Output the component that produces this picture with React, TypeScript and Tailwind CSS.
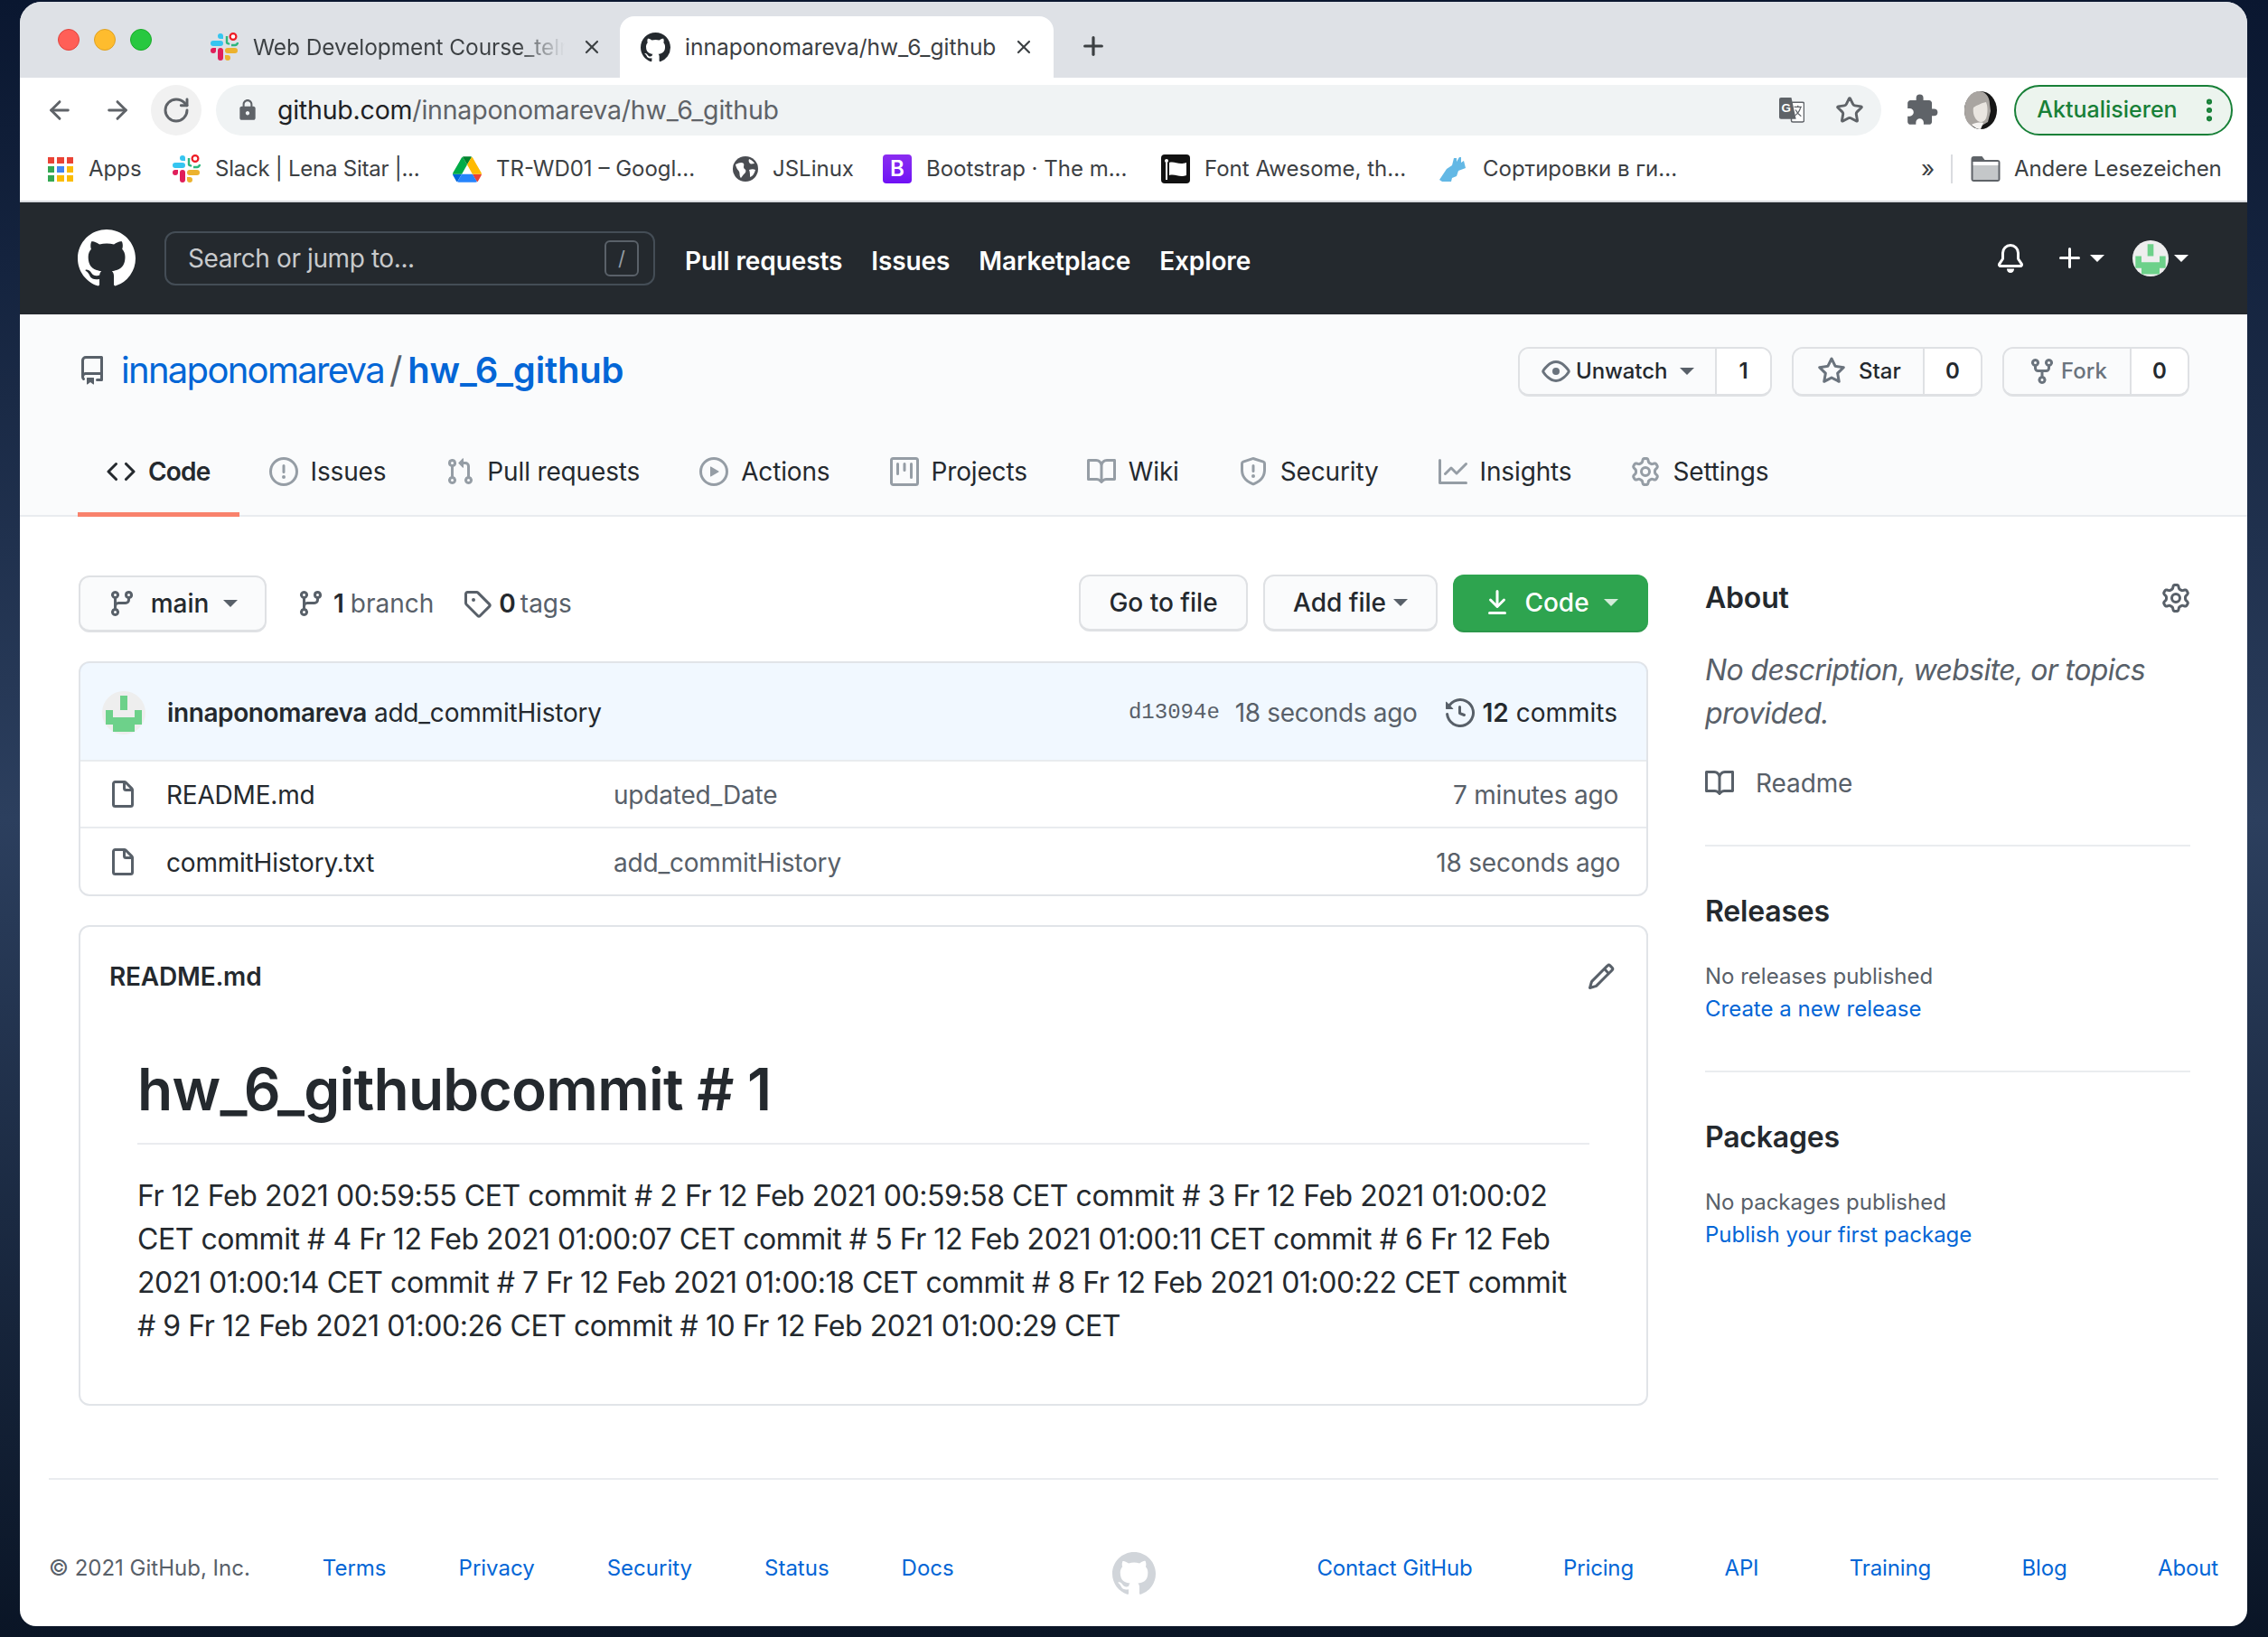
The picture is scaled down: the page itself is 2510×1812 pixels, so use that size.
import { ArrowLeft, ArrowRight, RotateCw, Star, X, Plus, EllipsisVertical } from "lucide-react";
import { MdExtension, MdLock } from "react-icons/md";

const octicons: Record<string, string> = {
  github: "M8 0C3.58 0 0 3.58 0 8c0 3.54 2.29 6.53 5.47 7.59.4.07.55-.17.55-.38 0-.19-.01-.82-.01-1.49-2.01.37-2.53-.49-2.69-.94-.09-.23-.48-.94-.82-1.13-.28-.15-.68-.52-.01-.53.63-.01 1.08.58 1.23.82.72 1.21 1.87.87 2.33.66.07-.52.28-.87.51-1.07-1.78-.2-3.64-.89-3.64-3.95 0-.87.31-1.59.82-2.15-.08-.2-.36-1.02.08-2.12 0 0 .67-.21 2.2.82.64-.18 1.32-.27 2-.27.68 0 1.36.09 2 .27 1.53-1.04 2.2-.82 2.2-.82.44 1.1.16 1.92.08 2.12.51.56.82 1.27.82 2.15 0 3.07-1.87 3.75-3.65 3.95.29.25.54.73.54 1.48 0 1.07-.01 1.93-.01 2.2 0 .21.15.46.55.38A8.013 8.013 0 0016 8c0-4.42-3.58-8-8-8z",
  repo: "M2 2.5A2.5 2.5 0 014.5 0h8.75a.75.75 0 01.75.75v12.5a.75.75 0 01-.75.75h-2.5a.75.75 0 110-1.5h1.75v-2h-8a1 1 0 00-.714 1.7.75.75 0 01-1.072 1.05A2.495 2.495 0 012 11.5v-9zm10.5-1V9h-8c-.356 0-.694.074-1 .208V2.5a1 1 0 011-1h8zM5 12.25v3.25a.25.25 0 00.4.2l1.45-1.087a.25.25 0 01.3 0L8.6 15.7a.25.25 0 00.4-.2v-3.25a.25.25 0 00-.25-.25h-3.5a.25.25 0 00-.25.25z",
  code: "M4.72 3.22a.75.75 0 011.06 1.06L2.06 8l3.72 3.72a.75.75 0 11-1.06 1.06L.47 8.53a.75.75 0 010-1.06l4.25-4.25zm6.56 0a.75.75 0 10-1.06 1.06L13.94 8l-3.72 3.72a.75.75 0 101.06 1.06l4.25-4.25a.75.75 0 000-1.06l-4.25-4.25z",
  issue: "M8 1.5a6.5 6.5 0 100 13 6.5 6.5 0 000-13zM0 8a8 8 0 1116 0A8 8 0 010 8zm9 3a1 1 0 11-2 0 1 1 0 012 0zm-.25-6.25a.75.75 0 00-1.5 0v3.5a.75.75 0 001.5 0v-3.5z",
  pr: "M7.177 3.073L9.573.677A.25.25 0 0110 .854v4.792a.25.25 0 01-.427.177L7.177 3.427a.25.25 0 010-.354zM3.75 2.5a.75.75 0 100 1.5.75.75 0 000-1.5zm-2.25.75a2.25 2.25 0 113 2.122v5.256a2.251 2.251 0 11-1.5 0V5.372A2.25 2.25 0 011.5 3.25zM11 2.5h-1V4h1a1 1 0 011 1v5.628a2.251 2.251 0 101.5 0V5A2.5 2.5 0 0011 2.5zm1 10.25a.75.75 0 111.5 0 .75.75 0 01-1.5 0zM3.75 12a.75.75 0 100 1.5.75.75 0 000-1.5z",
  play: "M1.5 8a6.5 6.5 0 1113 0 6.5 6.5 0 01-13 0zM8 0a8 8 0 100 16A8 8 0 008 0zM6.379 5.227A.25.25 0 006 5.442v5.117a.25.25 0 00.379.214l4.264-2.559a.25.25 0 000-.428L6.379 5.227z",
  project: "M1.75 0A1.75 1.75 0 000 1.75v12.5C0 15.216.784 16 1.75 16h12.5A1.75 1.75 0 0016 14.25V1.75A1.75 1.75 0 0014.25 0H1.75zM1.5 1.75a.25.25 0 01.25-.25h12.5a.25.25 0 01.25.25v12.5a.25.25 0 01-.25.25H1.75a.25.25 0 01-.25-.25V1.75zM11.75 3a.75.75 0 00-.75.75v7.5a.75.75 0 001.5 0v-7.5a.75.75 0 00-.75-.75zm-8.25.75a.75.75 0 011.5 0v5.5a.75.75 0 01-1.5 0v-5.5zM8 3a.75.75 0 00-.75.75v3.5a.75.75 0 001.5 0v-3.5A.75.75 0 008 3z",
  book: "M0 1.75A.75.75 0 01.75 1h4.253c1.227 0 2.317.59 3 1.501A3.744 3.744 0 0111.006 1h4.245a.75.75 0 01.75.75v10.5a.75.75 0 01-.75.75h-4.507a2.25 2.25 0 00-1.591.659l-.622.621a.75.75 0 01-1.06 0l-.622-.621A2.25 2.25 0 005.258 13H.75a.75.75 0 01-.75-.75V1.75zm8.755 3a2.25 2.25 0 012.25-2.25H14.5v9h-3.757c-.71 0-1.4.201-1.992.572l.004-7.322zm-1.504 7.324l.004-5.073-.002-2.253A2.25 2.25 0 005.003 2.5H1.5v9h3.757a3.75 3.75 0 011.994.574z",
  shield: "M7.467.133a1.75 1.75 0 011.066 0l5.25 1.68A1.75 1.75 0 0115 3.48V7c0 1.566-.32 3.182-1.303 4.682-.983 1.498-2.585 2.813-5.032 3.855a1.7 1.7 0 01-1.33 0c-2.447-1.042-4.049-2.357-5.032-3.855C1.32 10.182 1 8.566 1 7V3.48a1.75 1.75 0 011.217-1.667l5.25-1.68zm.61 1.429a.25.25 0 00-.153 0l-5.25 1.68a.25.25 0 00-.174.238V7c0 1.358.275 2.666 1.057 3.86.784 1.194 2.121 2.34 4.366 3.297a.2.2 0 00.154 0c2.245-.956 3.582-2.104 4.366-3.298C13.225 9.666 13.5 8.36 13.5 7V3.48a.25.25 0 00-.174-.237l-5.25-1.68zM9 10.5a1 1 0 11-2 0 1 1 0 012 0zm-.25-5.75a.75.75 0 10-1.5 0v3a.75.75 0 001.5 0v-3z",
  graph: "M1.5 1.75a.75.75 0 00-1.5 0v12.5c0 .414.336.75.75.75h14.5a.75.75 0 000-1.5H1.5V1.75zm14.28 2.53a.75.75 0 00-1.06-1.06L10 7.94 7.53 5.47a.75.75 0 00-1.06 0L3.22 8.72a.75.75 0 001.06 1.06L7 7.06l2.47 2.47a.75.75 0 001.06 0l5.25-5.25z",
  gear: "M7.429 1.525a6.593 6.593 0 011.142 0c.036.003.108.036.137.146l.289 1.105c.147.56.55.967.997 1.189.174.086.341.183.501.29.417.278.97.423 1.53.27l1.102-.303c.11-.03.175.016.195.046.219.31.41.641.573.989.014.031.022.11-.059.19l-.815.806c-.411.406-.562.957-.53 1.456a4.588 4.588 0 010 .582c-.032.499.119 1.05.53 1.456l.815.806c.08.08.073.159.059.19a6.494 6.494 0 01-.573.99c-.02.029-.086.074-.195.045l-1.103-.303c-.559-.153-1.112-.008-1.529.27-.16.107-.327.204-.5.29-.449.222-.851.628-.998 1.189l-.289 1.105c-.029.11-.101.143-.137.146a6.613 6.613 0 01-1.142 0c-.036-.003-.108-.037-.137-.146l-.289-1.105c-.147-.56-.55-.967-.997-1.189a4.502 4.502 0 01-.501-.29c-.417-.278-.97-.423-1.53-.27l-1.102.303c-.11.03-.175-.016-.195-.046a6.492 6.492 0 01-.573-.989c-.014-.031-.022-.11.059-.19l.815-.806c.411-.406.562-.957.53-1.456a4.587 4.587 0 010-.582c.032-.499-.119-1.05-.53-1.456l-.815-.806c-.08-.08-.073-.159-.059-.19a6.44 6.44 0 01.573-.99c.02-.029.086-.075.195-.045l1.103.303c.559.153 1.112.008 1.529-.27.16-.107.327-.204.5-.29.449-.222.851-.628.998-1.189l.289-1.105c.029-.11.101-.143.137-.146zM8 0c-.236 0-.47.01-.701.03-.743.065-1.29.615-1.458 1.261l-.29 1.106c-.017.066-.078.158-.211.224a5.994 5.994 0 00-.668.386c-.123.082-.233.09-.3.071L3.27 2.776c-.644-.177-1.392.02-1.82.63a7.977 7.977 0 00-.704 1.217c-.315.675-.111 1.422.363 1.891l.815.806c.05.048.098.147.088.294a6.084 6.084 0 000 .772c.01.147-.038.246-.088.294l-.815.806c-.474.469-.678 1.216-.363 1.891.2.428.436.835.704 1.218.428.609 1.176.806 1.82.63l1.103-.303c.066-.019.176-.011.299.071.213.143.436.272.668.386.133.066.194.158.212.224l.289 1.106c.169.646.715 1.196 1.458 1.26a8.094 8.094 0 001.402 0c.743-.064 1.29-.614 1.458-1.26l.29-1.106c.017-.066.078-.158.211-.224a5.98 5.98 0 00.668-.386c.123-.082.233-.09.3-.071l1.102.302c.644.177 1.392-.02 1.82-.63.268-.382.505-.789.704-1.217.315-.675.111-1.422-.364-1.891l-.814-.806c-.05-.048-.098-.147-.088-.294a6.1 6.1 0 000-.772c-.01-.147.039-.246.088-.294l.814-.806c.475-.469.679-1.216.364-1.891a7.992 7.992 0 00-.704-1.218c-.428-.609-1.176-.806-1.82-.63l-1.103.303c-.066.019-.176.011-.299-.071a5.991 5.991 0 00-.668-.386c-.133-.066-.194-.158-.212-.224L10.16 1.29C9.99.645 9.444.095 8.701.031A8.094 8.094 0 008 0zm1.5 8a1.5 1.5 0 11-3 0 1.5 1.5 0 013 0zM11 8a3 3 0 11-6 0 3 3 0 016 0z",
  eye: "M1.679 7.932c.412-.621 1.242-1.75 2.366-2.717C5.175 4.242 6.527 3.5 8 3.5c1.473 0 2.824.742 3.955 1.715 1.124.967 1.954 2.096 2.366 2.717a.119.119 0 010 .136c-.412.621-1.242 1.75-2.366 2.717C10.825 11.758 9.473 12.5 8 12.5c-1.473 0-2.824-.742-3.955-1.715C2.92 9.818 2.09 8.69 1.679 8.068a.119.119 0 010-.136zM8 2c-1.981 0-3.67.992-4.933 2.078C1.797 5.169.88 6.423.43 7.1a1.619 1.619 0 000 1.798c.45.678 1.367 1.932 2.637 3.024C4.329 13.008 6.019 14 8 14c1.981 0 3.67-.992 4.933-2.078 1.27-1.091 2.187-2.345 2.637-3.023a1.619 1.619 0 000-1.798c-.45-.678-1.367-1.932-2.637-3.023C11.671 2.992 9.981 2 8 2zm0 8a2 2 0 100-4 2 2 0 000 4z",
  star: "M8 .25a.75.75 0 01.673.418l1.882 3.815 4.21.612a.75.75 0 01.416 1.279l-3.046 2.97.719 4.192a.75.75 0 01-1.088.791L8 12.347l-3.766 1.98a.75.75 0 01-1.088-.79l.72-4.194L.818 6.374a.75.75 0 01.416-1.28l4.21-.611L7.327.668A.75.75 0 018 .25zm0 2.445L6.615 5.5a.75.75 0 01-.564.41l-3.097.45 2.24 2.184a.75.75 0 01.216.664l-.528 3.084 2.769-1.456a.75.75 0 01.698 0l2.77 1.456-.53-3.084a.75.75 0 01.216-.664l2.24-2.183-3.096-.45a.75.75 0 01-.564-.41L8 2.694v.001z",
  fork: "M5 3.25a.75.75 0 11-1.5 0 .75.75 0 011.5 0zm0 2.122a2.25 2.25 0 10-1.5 0v.878A2.25 2.25 0 005.75 8.5h1.5v2.128a2.251 2.251 0 101.5 0V8.5h1.5a2.25 2.25 0 002.25-2.25v-.878a2.25 2.25 0 10-1.5 0v.878a.75.75 0 01-.75.75h-4.5A.75.75 0 015 6.25v-.878zm3.75 7.378a.75.75 0 11-1.5 0 .75.75 0 011.5 0zm3-8.75a.75.75 0 100-1.5.75.75 0 000 1.5z",
  branch: "M11.75 2.5a.75.75 0 100 1.5.75.75 0 000-1.5zm-2.25.75a2.25 2.25 0 113 2.122V6A2.5 2.5 0 0110 8.5H6a1 1 0 00-1 1v1.128a2.251 2.251 0 11-1.5 0V5.372a2.25 2.25 0 111.5 0v1.836A2.492 2.492 0 016 7h4a1 1 0 001-1v-.628A2.25 2.25 0 019.5 3.25zM4.25 12a.75.75 0 100 1.5.75.75 0 000-1.5zM3.5 3.25a.75.75 0 111.5 0 .75.75 0 01-1.5 0z",
  tag: "M2.5 7.775V2.75a.25.25 0 01.25-.25h5.025a.25.25 0 01.177.073l6.25 6.25a.25.25 0 010 .354l-5.025 5.025a.25.25 0 01-.354 0l-6.25-6.25a.25.25 0 01-.073-.177zm-1.5 0V2.75C1 1.784 1.784 1 2.75 1h5.025c.464 0 .91.184 1.238.513l6.25 6.25a1.75 1.75 0 010 2.474l-5.026 5.026a1.75 1.75 0 01-2.474 0l-6.25-6.25A1.75 1.75 0 011 7.775zM6 5a1 1 0 100 2 1 1 0 000-2z",
  download: "M7.47 10.78a.75.75 0 001.06 0l3.75-3.75a.75.75 0 00-1.06-1.06L8.75 8.44V1.75a.75.75 0 00-1.5 0v6.69L4.78 5.97a.75.75 0 00-1.06 1.06l3.75 3.75zM3.75 13a.75.75 0 000 1.5h8.5a.75.75 0 000-1.5h-8.5z",
  history: "M1.643 3.143L.427 1.927A.25.25 0 000 2.104V5.75c0 .138.112.25.25.25h3.646a.25.25 0 00.177-.427L2.715 4.215a6.5 6.5 0 11-1.18 4.458.75.75 0 10-1.493.154 8.001 8.001 0 101.6-5.684zM7.75 4a.75.75 0 01.75.75v2.992l2.028.812a.75.75 0 01-.557 1.392l-2.5-1A.75.75 0 017 8.25v-3.5A.75.75 0 017.75 4z",
  file: "M3.75 1.5a.25.25 0 00-.25.25v11.5c0 .138.112.25.25.25h8.5a.25.25 0 00.25-.25V6H9.75A1.75 1.75 0 018 4.25V1.5H3.75zm5.75.56v2.19c0 .138.112.25.25.25h2.19L9.5 2.06zM2 1.75C2 .784 2.784 0 3.75 0h5.086c.464 0 .909.184 1.237.513l3.414 3.414c.329.328.513.773.513 1.237v8.086A1.75 1.75 0 0112.25 15h-8.5A1.75 1.75 0 012 13.25V1.75z",
  pencil: "M11.013 1.427a1.75 1.75 0 012.474 0l1.086 1.086a1.75 1.75 0 010 2.474l-8.61 8.61c-.21.21-.47.364-.756.445l-3.251.93a.75.75 0 01-.927-.928l.929-3.25a1.75 1.75 0 01.445-.758l8.61-8.61zm1.414 1.06a.25.25 0 00-.354 0L10.811 3.75l1.439 1.44 1.263-1.263a.25.25 0 000-.354l-1.086-1.086zM11.189 6.25L9.75 4.81l-6.286 6.287a.25.25 0 00-.064.108l-.558 1.953 1.953-.558a.249.249 0 00.108-.064l6.286-6.286z",
  bell: "M8 16a2 2 0 001.985-2.25h-3.97A2 2 0 008 16zM3 5a5 5 0 0110 0v2.947c0 .05.015.098.042.139l1.703 2.555A1.518 1.518 0 0113.482 13H2.518a1.518 1.518 0 01-1.263-2.36l1.703-2.554A.25.25 0 003 7.947V5zm5-3.5A3.5 3.5 0 004.5 5v2.947c0 .346-.102.683-.294.97l-1.703 2.556a.018.018 0 00-.003.01l.001.006c0 .002.002.004.004.006a.017.017 0 00.006.004l.007.001h10.964l.007-.001a.016.016 0 00.006-.004.016.016 0 00.004-.006l.001-.007a.017.017 0 00-.003-.01l-1.703-2.554a1.75 1.75 0 01-.294-.97V5A3.5 3.5 0 008 1.5z",
  plus: "M7.75 2a.75.75 0 01.75.75V7h4.25a.75.75 0 110 1.5H8.5v4.25a.75.75 0 11-1.5 0V8.5H2.75a.75.75 0 010-1.5H7V2.75A.75.75 0 017.75 2z",
};

const Octicon = ({ name, className }: { name: string; className: string }) => (
  <svg viewBox="0 0 16 16" fill="currentColor" className={`shrink-0 ${className}`}>
    <path fillRule="evenodd" d={octicons[name]} />
  </svg>
);

const Caret = ({ className = "" }: { className?: string }) => (
  <span className={`inline-block w-0 h-0 border-x-[8px] border-t-[8px] border-x-transparent border-t-current ${className}`} />
);

const SlackLogo = ({ className }: { className: string }) => (
  <svg viewBox="0 0 32 32" className={`shrink-0 ${className}`}>
    <path fill="#36c5f0" d="M12 1a3 3 0 000 6h3V4a3 3 0 00-3-3zM4 9a3 3 0 000 6h8a3 3 0 000-6z" />
    <path fill="none" stroke="#2eb67d" strokeWidth="2.4" d="M19 4v7a2 2 0 003 1M24 14h4a3 3 0 003-3" />
    <circle cx="26" cy="4.5" r="3.4" fill="#fff" stroke="#ee1c25" strokeWidth="2.2" />
    <path fill="#ecb22e" d="M20 31a3 3 0 000-6h-3v3a3 3 0 003 3zM28 23a3 3 0 000-6h-8a3 3 0 000 6z" />
    <path fill="#e01e5a" d="M1 20a3 3 0 006 0v-3H4a3 3 0 00-3 3zM9 28a3 3 0 006 0v-8a3 3 0 00-6 0z" />
  </svg>
);

const DriveLogo = () => (
  <svg viewBox="0 0 87.3 78" className="w-[32px] h-[29px] shrink-0">
    <path fill="#0066da" d="m6.6 66.85 3.85 6.65c.8 1.4 1.95 2.5 3.3 3.3l13.75-23.8h-27.5c0 1.55.4 3.1 1.2 4.5z" />
    <path fill="#00ac47" d="m43.65 25-13.75-23.8c-1.35.8-2.5 1.9-3.3 3.3l-25.4 44a9.06 9.06 0 0 0 -1.2 4.5h27.5z" />
    <path fill="#ea4335" d="m73.55 76.8c1.35-.8 2.5-1.9 3.3-3.3l1.6-2.75 7.65-13.25c.8-1.4 1.2-2.95 1.2-4.5h-27.502l5.852 11.5z" />
    <path fill="#00832d" d="m43.65 25 13.75-23.8c-1.35-.8-2.9-1.2-4.5-1.2h-18.5c-1.6 0-3.15.45-4.5 1.2z" />
    <path fill="#2684fc" d="m59.8 53h-32.3l-13.75 23.8c1.35.8 2.9 1.2 4.5 1.2h50.8c1.6 0 3.15-.45 4.5-1.2z" />
    <path fill="#ffba00" d="m73.4 26.5-12.7-22c-.8-1.4-1.95-2.5-3.3-3.3l-13.75 23.8 16.15 28h27.45c0-1.55-.4-3.1-1.2-4.5z" />
  </svg>
);

const Identicon = ({ className }: { className: string }) => (
  <svg viewBox="0 0 48 48" className={`shrink-0 ${className}`}>
    <circle cx="24" cy="24" r="24" fill="#eeeeee" />
    <path fill="#6dd18a" d="M20 5h8v16h-8zM4 21h8v8h24v-8h8v16h-8v8H12v-8H4z" />
  </svg>
);

const bookmarks = [
  { label: "Slack | Lena Sitar |...", width: "w-[229px] tracking-[-0.25px]", gap: "ml-[32px]", icon: <SlackLogo className="w-[32px] h-[32px]" /> },
  { label: "TR-WD01 – Googl...", width: "w-[222px]", gap: "ml-[34px]", icon: <DriveLogo /> },
  { label: "JSLinux", width: "w-[89px]", gap: "ml-[40px]", icon: (
    <svg viewBox="0 0 28 28" className="w-[28px] h-[28px] shrink-0">
      <circle cx="14" cy="14" r="14" fill="#4a4d52" />
      <path fill="#fff" d="M3 9c4-2 7-3 9-1 1 2-1 4 1 6 2 1 2 4-1 6l-3 4c-2-2-1-5-2-7-1-2-3-3-4-8zM18 3c3 1 5 3 6 5-2 0-4 1-5 0s-2-3-1-5zM18 15c3-1 5-1 7 0-1 4-3 7-6 8 0-3 0-6-1-8z" />
    </svg>
  ) },
  { label: "Bootstrap · The m...", width: "w-[221px]", gap: "ml-[33px]", icon: (
    <span className="w-[32px] h-[32px] shrink-0 rounded-[4px] bg-gradient-to-b from-[#8b2cf0] to-[#6f0ff5] text-white font-semibold text-[24px] leading-[32px] text-center">B</span>
  ) },
  { label: "Font Awesome, th...", width: "w-[221px]", gap: "ml-[39px]", icon: (
    <svg viewBox="0 0 32 32" className="w-[32px] h-[32px] shrink-0">
      <rect width="32" height="32" rx="4" fill="#111" />
      <circle cx="6" cy="7" r="2" fill="#fff" />
      <path fill="#fff" d="M5 9h2v19H5zM9 9c6-2 10 3 19 0v14c-8 3-12-2-19 0z" />
    </svg>
  ) },
  { label: "Сортировки в ги...", width: "w-[215px]", gap: "ml-[39px]", icon: (
    <svg viewBox="0 0 32 28" className="w-[32px] h-[28px] shrink-0">
      <path fill="#63b8e5" d="M0 26l8-12 6-4 2-8h3v4l3-5h2v6l3-2 2 8-8 3-2 6-5 2-1 4H3z" />
    </svg>
  ) },
];

const repoTabs = [
  { label: "Issues", icon: "issue" },
  { label: "Pull requests", icon: "pr" },
  { label: "Actions", icon: "play" },
  { label: "Projects", icon: "project" },
  { label: "Wiki", icon: "book" },
  { label: "Security", icon: "shield" },
  { label: "Insights", icon: "graph" },
  { label: "Settings", icon: "gear" },
];

const footerLeft = ["Terms", "Privacy", "Security", "Status", "Docs"];
const footerRight = ["Contact GitHub", "Pricing", "API", "Training", "Blog", "About"];

const BrowserChrome = () => (
  <div className="shrink-0 text-[#3c4043]">
    <div className="h-[84px] bg-[#dee1e6] flex items-end">
      <div className="flex items-center gap-[16px] h-[84px] pl-[42px]">
        <span className="w-[24px] h-[24px] rounded-full bg-[#ff5f57] border border-[#e0443e]" />
        <span className="w-[24px] h-[24px] rounded-full bg-[#febc2e] border border-[#dea123]" />
        <span className="w-[24px] h-[24px] rounded-full bg-[#28c840] border border-[#1aab29]" />
      </div>
      <div className="flex items-center h-[68px] w-[518px] pl-[64px]">
        <SlackLogo className="w-[32px] h-[32px]" />
        <span className="ml-[16px] w-[345px] overflow-hidden whitespace-nowrap text-[24.5px] tracking-[-0.1px] bg-gradient-to-r from-[#3c4043] from-[85%] to-transparent bg-clip-text text-transparent">Web Development Course_telran</span>
        <X className="ml-[18px] w-[24px] h-[24px]" strokeWidth={2.2} />
      </div>
      <div className="flex items-center h-[68px] w-[480px] bg-white rounded-t-[16px] pl-[23px]">
        <Octicon name="github" className="w-[33px] h-[33px] text-[#24292e]" />
        <span className="ml-[16px] w-[340px] whitespace-nowrap text-[24.5px]">innaponomareva/hw_6_github</span>
        <X className="ml-[23px] w-[24px] h-[24px]" strokeWidth={2.2} />
      </div>
      <Plus className="ml-[28px] mb-[19px] w-[32px] h-[32px]" strokeWidth={2.4} />
    </div>
    <div className="h-[72px] bg-white flex items-center pl-[28px] pr-[16px]">
      <ArrowLeft className="w-[32px] h-[32px] text-[#5f6368]" strokeWidth={2.2} />
      <ArrowRight className="ml-[32px] w-[32px] h-[32px] text-[#5f6368]" strokeWidth={2.2} />
      <span className="ml-[21px] w-[56px] h-[56px] rounded-full bg-[#f1f1f1] flex items-center justify-center">
        <RotateCw className="w-[32px] h-[32px] text-[#5f6368]" strokeWidth={2.2} />
      </span>
      <div className="ml-[16px] w-[1845px] h-[56px] rounded-full bg-[#f0f3f4] flex items-center pl-[22px] pr-[15px]">
        <MdLock className="w-[26px] h-[26px] text-[#5f6368]" />
        <span className="ml-[20px] text-[28.5px] tracking-[-0.2px] whitespace-nowrap text-[#202124]">github.com<span className="text-[#5f6368]">/innaponomareva/hw_6_github</span></span>
        <svg viewBox="0 0 27 27" className="ml-auto w-[28px] h-[28px] shrink-0">
          <rect x="13" y="5" width="13.5" height="21" rx="1.5" fill="#fff" stroke="#5f6368" strokeWidth="1.4" />
          <path d="M16 10h8M20 8.5v1.5M23 10c-1 4-3 7-6 9M17.5 13c1.5 3 3 5 6 7" stroke="#5f6368" strokeWidth="1.2" fill="none" />
          <path fill="#5f6368" d="M2 0h11l5 23H2a2 2 0 01-2-2V2a2 2 0 012-2z" />
          <text x="2.5" y="15" fontSize="13" fontWeight="700" fill="#fff" fontFamily="Liberation Sans, sans-serif">G</text>
        </svg>
        <Star className="ml-[34px] mr-[4px] w-[32px] h-[32px] text-[#5f6368]" strokeWidth={2.2} />
      </div>
      <MdExtension className="ml-[26px] w-[38px] h-[38px] text-[#5f6368]" />
      <svg viewBox="0 0 36 42" className="ml-[28px] w-[36px] h-[42px] shrink-0">
        <ellipse cx="18" cy="21" rx="18" ry="21" fill="#161616" />
        <path fill="#a9a5a1" d="M0 22C0 9 8 0 16 0c7 0 12 6 12 14l1 8-3 12-10 6C6 40 0 33 0 22z" />
        <path fill="#e9e5e0" d="M10 18c3-2 9-5 14-6 2 5 2 12 0 18-2 4-6 5-9 3-4-3-6-9-5-15z" />
        <path fill="#f4f2f0" d="M8 37c3-2 8-3 13-2l-3 7c-4 0-7-2-10-5z" />
      </svg>
      <div className="ml-[19px] w-[242px] h-[56px] rounded-full border-[2px] border-[#188038] bg-[#ecf4ee] flex items-center pl-[23px] text-[#188038]">
        <span className="text-[25px] font-medium whitespace-nowrap">Aktualisieren</span>
        <EllipsisVertical className="ml-[19px] w-[32px] h-[32px]" strokeWidth={2.6} />
      </div>
    </div>
    <div className="h-[66px] bg-white flex items-center pl-[31px] pb-[6px] border-b-[2px] border-[#dadce0] text-[24px] whitespace-nowrap">
      <div className="grid grid-cols-3 gap-[3px] w-[28px] shrink-0">
        {["bg-[#ea4335]","bg-[#ea4335]","bg-[#ea4335]","bg-[#34a853]","bg-[#4285f4]","bg-[#fbbc05]","bg-[#34a853]","bg-[#fbbc05]","bg-[#fbbc05]"].map((c, i) => (
          <span key={i} className={`h-[7px] ${c}`} />
        ))}
      </div>
      <span className="ml-[17px] w-[60px]">Apps</span>
      {bookmarks.map((b) => (
        <div key={b.label} className={`flex items-center ${b.gap}`}>
          {b.icon}
          <span className={`ml-[16px] ${b.width}`}>{b.label}</span>
        </div>
      ))}
      <span className="ml-[270px] w-[20px] text-[26px] leading-none">»</span>
      <span className="ml-[13px] w-[2px] h-[32px] bg-[#dadce0]" />
      <svg viewBox="0 0 32 28" className="ml-[20px] w-[33px] h-[28px] shrink-0">
        <path fill="#5f6368" d="M0 3a3 3 0 013-3h9l3 4h14a3 3 0 013 3v18a3 3 0 01-3 3H3a3 3 0 01-3-3z" />
        <path fill="#fff" d="M2 6h28v4H2z" />
        <path fill="#c4c7c9" d="M2 10h28v16H2z" />
      </svg>
      <span className="ml-[15px] tracking-[-0.1px]">Andere Lesezeichen</span>
    </div>
  </div>
);

const GithubHeader = () => (
  <div className="h-[124px] shrink-0 bg-[#24292e] flex items-center pl-[64px] pr-[65px] text-white">
    <Octicon name="github" className="w-[64px] h-[64px]" />
    <div className="ml-[32px] w-[543px] h-[60px] rounded-[12px] border-[2px] border-[#444d56] flex items-center justify-between pl-[24px] pr-[16px]">
      <span className="text-[28px] tracking-[-0.4px] text-[#c8cacc]">Search or jump to...</span>
      <span className="w-[38px] h-[40px] rounded-[6px] border-[2px] border-[#5a6169] flex items-center justify-center text-[22px] text-[#959da5]">/</span>
    </div>
    <nav className="ml-[33px] mt-[6px] flex items-center gap-[32px] text-[28px] tracking-[-0.1px] font-semibold whitespace-nowrap">
      <span>Pull requests</span>
      <span>Issues</span>
      <span>Marketplace</span>
      <span>Explore</span>
    </nav>
    <Octicon name="bell" className="ml-auto w-[32px] h-[32px]" />
    <Octicon name="plus" className="ml-[34px] w-[32px] h-[32px]" />
    <Caret className="ml-[6px]" />
    <Identicon className="ml-[31px] w-[40px] h-[40px]" />
    <Caret className="ml-[6px]" />
  </div>
);

const SocialButton = ({ icon, label, count, caret, w1, w2, muted, gap }: { icon: string; label: string; count: string; caret?: boolean; w1: string; w2: string; muted?: boolean; gap: string }) => (
  <div className="flex h-[55px] rounded-[12px] border-[2px] border-[#dfe1e4] border-b-[3px] text-[24px] font-medium overflow-hidden">
    <div className={`flex items-center border-r-[2px] border-[#dfe1e4] bg-[#fafbfc] ${w1} ${muted ? "text-[#6a737d]" : "text-[#24292e]"}`}>
      <Octicon name={icon} className="w-[32px] h-[32px] text-[#6a737d]" />
      <span className={gap}>{label}</span>
      {caret && <Caret className="ml-[14px] text-[#586069]" />}
    </div>
    <div className={`flex items-center justify-center bg-white font-semibold text-[#24292e] ${w2}`}>{count}</div>
  </div>
);

const RepoHead = () => (
  <div className="h-[224px] shrink-0 bg-[#fafbfc] border-b-[2px] border-[#e9ecef] flex flex-col justify-between pl-[64px] pr-[64px]">
    <div className="flex justify-between pt-[36px]">
      <div className="flex items-center h-[52px] text-[40px] whitespace-nowrap">
        <Octicon name="repo" className="w-[32px] h-[32px] text-[#586069]" />
        <span className="ml-[16px] tracking-[-1.7px] text-[#0366d6]">innaponomareva</span>
        <span className="mx-[6px] text-[#586069]">/</span>
        <span className="font-semibold tracking-[-0.2px] text-[#0366d6]">hw_6_github</span>
      </div>
      <div className="flex gap-[22px]">
        <SocialButton icon="eye" label="Unwatch" count="1" caret w1="w-[218px] pl-[24px]" w2="w-[59px]" gap="ml-[6px] tracking-[-0.1px]" />
        <SocialButton icon="star" label="Star" count="0" w1="w-[145px] pl-[26px]" w2="w-[62px]" gap="ml-[14px]" />
        <SocialButton icon="fork" label="Fork" count="0" muted w1="w-[141px] pl-[26px]" w2="w-[62px]" gap="ml-[5px]" />
      </div>
    </div>
    <nav className="flex -mb-[2px] text-[28px] text-[#24292e] whitespace-nowrap">
      <div className="flex items-center h-[73px] px-[32px] pb-[22px] border-b-[5px] border-[#f9826c] font-semibold">
        <Octicon name="code" className="w-[32px] h-[32px]" />
        <span className="ml-[14px] tracking-[-0.8px]">Code</span>
      </div>
      {repoTabs.map((t) => (
        <div key={t.label} className="flex items-center h-[73px] px-[33px] pb-[22px] border-b-[5px] border-transparent">
          <Octicon name={t.icon} className="w-[32px] h-[32px] text-[#959da5]" />
          <span className="ml-[14px] tracking-[-0.15px]">{t.label}</span>
        </div>
      ))}
    </nav>
  </div>
);

const Btn = ({ children, w }: { children: React.ReactNode; w: string }) => (
  <div className={`h-[63px] ${w} rounded-[12px] border-[2px] border-[#dfe1e4] border-b-[3px] bg-[#fafbfc] flex items-center justify-center text-[28px] font-medium text-[#24292e] whitespace-nowrap`}>
    {children}
  </div>
);

const FileRow = ({ name, msg, time, h, pr }: { name: string; msg: string; time: string; h: string; pr: string }) => (
  <div className={`flex items-center ${h} ${pr} pl-[31px] pt-[2px] border-t-[2px] border-[#e9ecef] text-[28px] tracking-[-0.2px] whitespace-nowrap`}>
    <Octicon name="file" className="w-[32px] h-[32px] text-[#586069]" />
    <span className="ml-[32px] w-[495px] text-[#24292e]">{name}</span>
    <span className="text-[#586069]">{msg}</span>
    <span className="ml-auto text-[#586069]">{time}</span>
  </div>
);

const MainColumn = () => (
  <div className="w-[1737px] shrink-0">
    <div className="flex items-center text-[28px] whitespace-nowrap">
      <Btn w="w-[208px]">
        <Octicon name="branch" className="w-[32px] h-[32px] text-[#586069]" />
        <span className="ml-[16px]">main</span>
        <Caret className="ml-[16px] text-[#586069]" />
      </Btn>
      <Octicon name="branch" className="ml-[33px] w-[32px] h-[32px] text-[#586069]" />
      <span className="ml-[9px] font-semibold text-[#24292e]">1</span>
      <span className="ml-[7px] text-[#586069]">branch</span>
      <Octicon name="tag" className="ml-[32px] w-[32px] h-[32px] text-[#586069]" />
      <span className="ml-[8px] font-semibold text-[#24292e]">0</span>
      <span className="ml-[5px] text-[#586069]">tags</span>
      <div className="ml-auto flex gap-[17px]">
        <Btn w="w-[187px]">Go to file</Btn>
        <Btn w="w-[193px]">
          Add file
          <Caret className="ml-[8px] text-[#586069]" />
        </Btn>
        <div className="h-[64px] w-[216px] rounded-[12px] bg-[#2ea44f] border-b-[2px] border-[#2c974b] flex items-center justify-center text-white font-medium text-[28px]">
          <Octicon name="download" className="w-[32px] h-[32px]" />
          <span className="ml-[14px]">Code</span>
          <Caret className="ml-[16px] text-[#d3ecd9]" />
        </div>
      </div>
    </div>

    <div className="mt-[32px] rounded-[12px] border-[2px] border-[#e1e4e8] overflow-hidden">
      <div className="h-[109px] -m-[2px] mb-0 rounded-t-[12px] border-[2px] border-b-0 border-[#c8e1ff] bg-[#f1f8ff] flex items-center pl-[24px] pr-[32px] pt-[2px] text-[28px] whitespace-nowrap">
        <Identicon className="w-[48px] h-[48px]" />
        <span className="ml-[24px] font-semibold tracking-[-0.4px] text-[#24292e]">innaponomareva</span>
        <span className="ml-[8px] tracking-[-0.2px] text-[#24292e]">add_commitHistory</span>
        <span className="ml-auto font-['Liberation_Mono',monospace] text-[24px] text-[#586069]">d13094e</span>
        <span className="ml-[17px] tracking-[-0.35px] text-[#586069]">18 seconds ago</span>
        <Octicon name="history" className="ml-[32px] w-[32px] h-[32px] text-[#586069]" />
        <span className="ml-[8px] font-semibold text-[#24292e]">12</span>
        <span className="ml-[8px] text-[#24292e]">commits</span>
      </div>
      <FileRow name="README.md" msg="updated_Date" time="7 minutes ago" h="h-[74px]" pr="pr-[31px]" />
      <FileRow name="commitHistory.txt" msg="add_commitHistory" time="18 seconds ago" h="h-[75px]" pr="pr-[29px]" />
    </div>

    <div className="mt-[32px] h-[532px] rounded-[12px] border-[2px] border-[#e1e4e8]">
      <div className="h-[110px] flex items-center justify-between pl-[32px] pr-[34px] text-[28px] tracking-[-0.2px] font-semibold text-[#24292e]">
        <span>README.md</span>
        <Octicon name="pencil" className="w-[32px] h-[32px] text-[#586069]" />
      </div>
      <div className="px-[63px] pt-[30px]">
        <h1 className="pb-[19px] border-b-[2px] border-[#eaecef] text-[64px] leading-[80px] tracking-[-0.76px] font-semibold text-[#24292e] whitespace-nowrap">hw_6_githubcommit # 1</h1>
        <p className="mt-[33px] text-[32px] leading-[48px] tracking-[-0.45px] text-[#24292e] whitespace-nowrap">
          Fr 12 Feb 2021 00:59:55 CET commit # 2 Fr 12 Feb 2021 00:59:58 CET commit # 3 Fr 12 Feb 2021 01:00:02<br />
          CET commit # 4 Fr 12 Feb 2021 01:00:07 CET commit # 5 Fr 12 Feb 2021 01:00:11 CET commit # 6 Fr 12 Feb<br />
          2021 01:00:14 CET commit # 7 Fr 12 Feb 2021 01:00:18 CET commit # 8 Fr 12 Feb 2021 01:00:22 CET commit<br />
          # 9 Fr 12 Feb 2021 01:00:26 CET commit # 10 Fr 12 Feb 2021 01:00:29 CET
        </p>
      </div>
    </div>
  </div>
);

const SideHeading = ({ children }: { children: React.ReactNode }) => (
  <h2 className="text-[32px] leading-[48px] tracking-[-0.2px] font-semibold text-[#24292e]">{children}</h2>
);

const Sidebar = () => (
  <aside className="w-[537px] shrink-0 ml-[63px] pt-[2px]">
    <div className="flex items-center justify-between">
      <SideHeading>About</SideHeading>
      <Octicon name="gear" className="w-[32px] h-[32px] text-[#586069]" />
    </div>
    <p className="mt-[32px] text-[32px] leading-[48px] tracking-[-0.6px] italic text-[#586069]">No description, website, or topics provided.</p>
    <div className="mt-[37px] flex items-center h-[32px] text-[28px] tracking-[-0.1px] text-[#586069]">
      <Octicon name="book" className="w-[32px] h-[32px]" />
      <span className="ml-[24px]">Readme</span>
    </div>
    <div className="mt-[52px] border-t-[2px] border-[#eaecef]" />
    <div className="mt-[48px]"><SideHeading>Releases</SideHeading></div>
    <p className="mt-[30px] text-[24px] leading-[36px] text-[#586069]">No releases published</p>
    <p className="text-[24px] leading-[36px] text-[#0366d6]">Create a new release</p>
    <div className="mt-[50px] border-t-[2px] border-[#eaecef]" />
    <div className="mt-[48px]"><SideHeading>Packages</SideHeading></div>
    <p className="mt-[30px] text-[24px] leading-[36px] text-[#586069]">No packages published</p>
    <p className="text-[24px] leading-[36px] text-[#0366d6]">Publish your first package</p>
  </aside>
);

const Footer = () => (
  <footer className="mx-[32px] mt-[80px] border-t-[2px] border-[#eaecef] pt-[80px] flex items-start justify-between text-[24px] leading-[36px] text-[#0366d6] whitespace-nowrap">
    <div className="w-[1000px] flex gap-[80px]">
      <span className="text-[#586069]">© 2021 GitHub, Inc.</span>
      {footerLeft.map((l) => <span key={l}>{l}</span>)}
    </div>
    <Octicon name="github" className="w-[48px] h-[48px] text-[#d1d5da]" />
    <div className="w-[1000px] flex justify-end gap-[100.5px] tracking-[-0.15px]">
      {footerRight.map((l) => <span key={l}>{l}</span>)}
    </div>
  </footer>
);

export default function App() {
  return (
    <div className="w-[2510px] h-[1812px] overflow-hidden pt-[2px] pl-[22px] bg-gradient-to-b from-[#0a1730] via-[#2c3f5e] to-[#0a1526] font-[Inter,sans-serif]">
      <div className="w-[2465px] h-[1798px] bg-white rounded-t-[24px] rounded-b-[18px] overflow-hidden flex flex-col">
        <BrowserChrome />
        <GithubHeader />
        <RepoHead />
        <div className="flex pl-[65px] pt-[64px]">
          <MainColumn />
          <Sidebar />
        </div>
        <Footer />
      </div>
    </div>
  );
}
